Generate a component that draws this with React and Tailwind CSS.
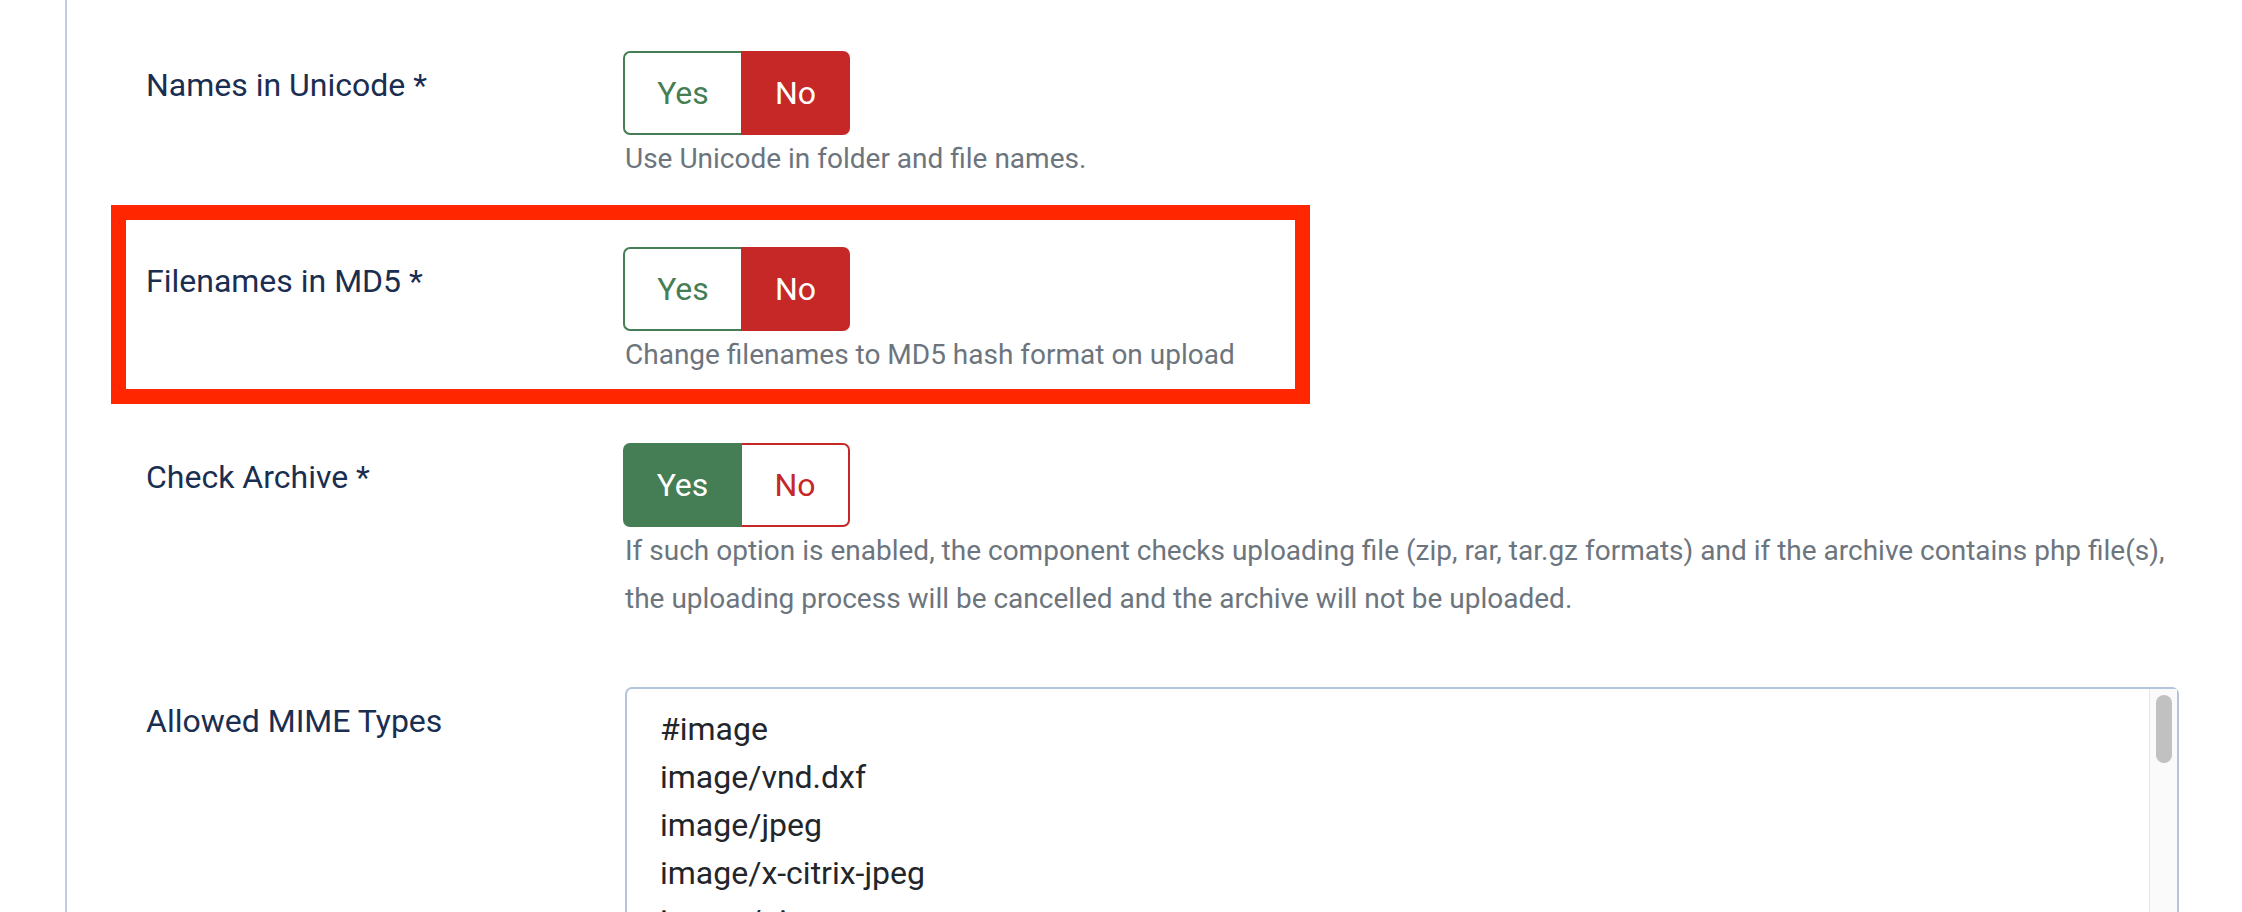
import React from "react";

function Toggle({ value }) {
  const yesActive = value === "yes";
  return (
    <div className="flex h-[84px] w-[227px] text-[32px] leading-[48px]">
      {yesActive ? (
        <div className="flex w-[119px] items-center justify-center rounded-l-[7px] bg-[#457d54] text-white">Yes</div>
      ) : (
        <div className="flex w-[118px] items-center justify-center rounded-l-[7px] border-2 border-r-0 border-[#457d54] bg-white text-[#457d54]">Yes</div>
      )}
      {yesActive ? (
        <div className="flex flex-1 items-center justify-center rounded-r-[7px] border-2 border-l-0 border-[#c52827] bg-white text-[#c52827]">No</div>
      ) : (
        <div className="flex flex-1 items-center justify-center rounded-r-[7px] bg-[#c52827] text-white">No</div>
      )}
    </div>
  );
}

function Row({ label, children, last }) {
  return (
    <div className={"flex " + (last ? "" : "mb-[64px]")}>
      <div className="mt-[10px] w-[477px] shrink-0 text-[32px] leading-[48px] text-[#1a2e51]">{label}</div>
      <div className="flex-1">{children}</div>
    </div>
  );
}

function Desc({ children }) {
  return <div className="pl-[2px] text-[28px] leading-[48px] text-[#6c757d]">{children}</div>;
}

export default function App() {
  const mimes = ["#image", "image/vnd.dxf", "image/jpeg", "image/x-citrix-jpeg", "image/pjpeg", "image/png", "image/x-citrix-png"];
  return (
    <div className="relative h-[912px] w-[2242px] overflow-hidden bg-white font-['Roboto',sans-serif]">
      <div className="ml-[65px] h-full border-l-2 border-[#bfcde0] pl-[79px] pr-[63px] pt-[51px]">
        <Row label="Names in Unicode *">
          <Toggle value="no" />
          <Desc>Use Unicode in folder and file names.</Desc>
        </Row>
        <Row label="Filenames in MD5 *">
          <Toggle value="no" />
          <Desc>Change filenames to MD5 hash format on upload</Desc>
        </Row>
        <Row label="Check Archive *">
          <Toggle value="yes" />
          <Desc>
            <span className="block whitespace-nowrap">If such option is enabled, the component checks uploading file (zip, rar, tar.gz formats) and if the archive contains php file(s),</span>
            <span className="block whitespace-nowrap">the uploading process will be cancelled and the archive will not be uploaded.</span>
          </Desc>
        </Row>
        <Row label="Allowed MIME Types" last>
          <div className="ml-[2px] flex h-[400px] rounded-[7px] border-2 border-[#b4c4dd] bg-white">
            <div className="flex-1 pl-[33px] pt-[16px] text-[32px] leading-[48px] text-[#22262a]">
              {mimes.map((m) => (
                <div key={m}>{m}</div>
              ))}
            </div>
            <div className="w-[28px] border-l border-[#e6e6e6] bg-[#fafafa] pl-[6px] pt-[6px]">
              <div className="h-[68px] w-[16px] rounded-full bg-[#c1c1c1]" />
            </div>
          </div>
        </Row>
      </div>
      <div className="pointer-events-none absolute left-[111px] top-[205px] h-[199px] w-[1199px] border-[15px] border-[#ff2600]" />
    </div>
  );
}
